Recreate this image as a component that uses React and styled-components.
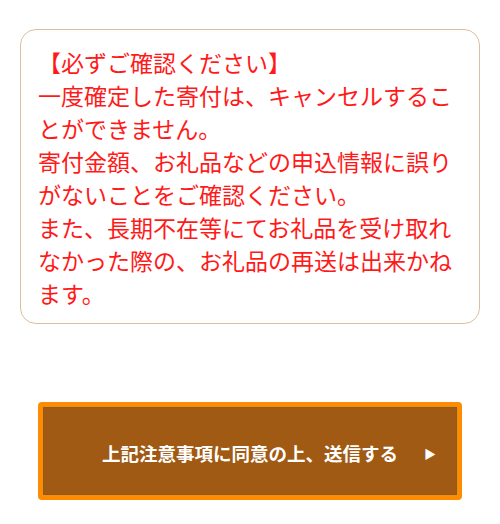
import styled, { createGlobalStyle } from 'styled-components';

const GlobalStyle = createGlobalStyle`
   body {
      margin: 0;
      background: #fff;
      font-family: "Noto Sans CJK JP", "Noto Sans", sans-serif;
   }
`

const Page = styled.div`
   width: 500px;
   padding: 29px 20px 24px;
   box-sizing: border-box;
   display: flex;
   flex-direction: column;
   align-items: stretch;
`

const NoticeBox = styled.div`
   border: 1px solid #dcbfa3;
   border-radius: 16px;
   padding: 16px 18px 13px 17px;
   color: #ff1a1a;
   font-size: 23px;
   line-height: 33px;

   p {
      margin: 0;
   }
`

const SubmitWrap = styled.div`
   margin: 78px 18px 0;
`

const SubmitButton = styled.button`
   width: 100%;
   height: 98px;
   box-sizing: border-box;
   border: 5px solid #ff8c00;
   border-radius: 4px;
   background: #a05a14;
   box-shadow: inset 0 0 0 1px #8a5a2a;
   color: #fff;
   font-family: inherit;
   font-size: 18.5px;
   font-weight: bold;
   display: flex;
   align-items: center;
   justify-content: center;
   position: relative;
   padding: 4px 0 0;
   cursor: pointer;

   span.arrow {
      position: absolute;
      right: 21px;
      font-size: 12px;
   }
`

export default function App() {
   return (
      <>
         <GlobalStyle />
         <Page>
            <NoticeBox>
               <p>【必ずご確認ください】</p>
               <p>一度確定した寄付は、キャンセルすることができません。</p>
               <p>寄付金額、お礼品などの申込情報に誤りがないことをご確認ください。</p>
               <p>また、長期不在等にてお礼品を受け取れなかった際の、お礼品の再送は出来かねます。</p>
            </NoticeBox>
            <SubmitWrap>
               <SubmitButton>
                  上記注意事項に同意の上、送信する
                  <span className="arrow">▶</span>
               </SubmitButton>
            </SubmitWrap>
         </Page>
      </>
   )
}
